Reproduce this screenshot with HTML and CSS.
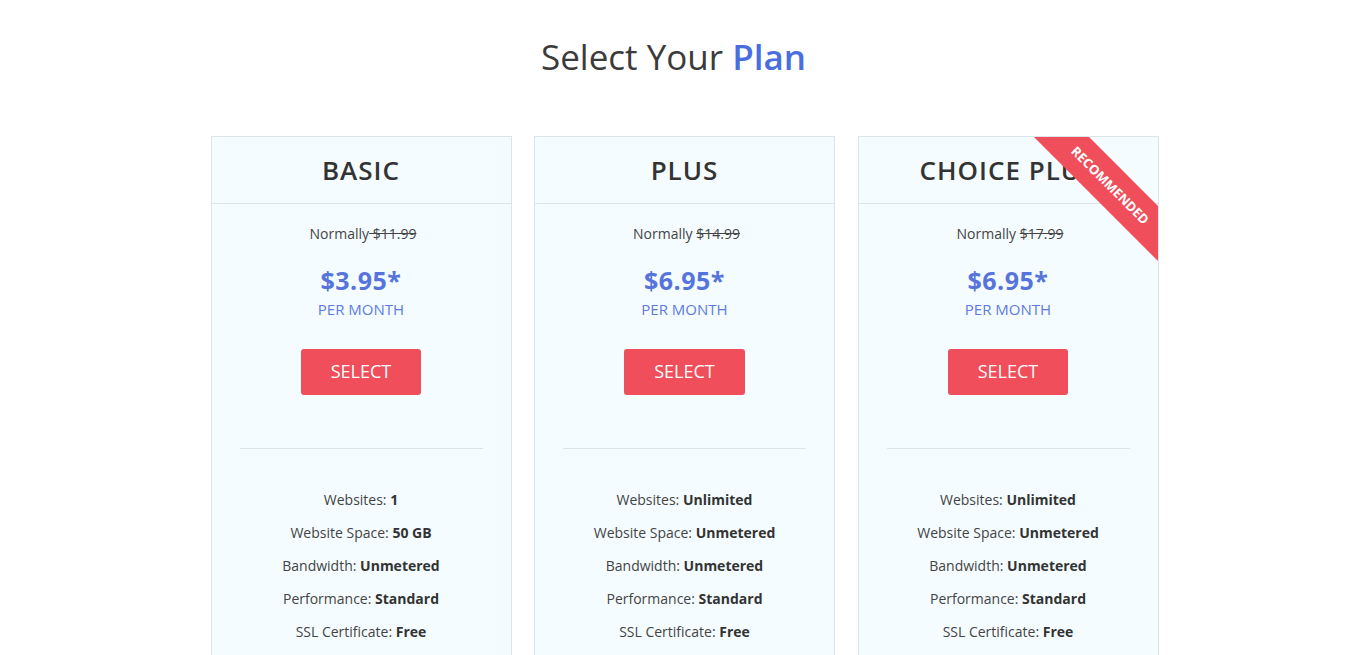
FILE: index.html
```html
<!DOCTYPE html>
<html lang="en">
<head>
<meta charset="utf-8">
<title>Select Your Plan</title>
<link rel="stylesheet" href="styles.css">
</head>
<body>
<section class="pricing">
  <h1 class="title">Select Your <span class="accent">Plan</span></h1>
  <div class="cards">
    <div class="card">
      <div class="card-head">BASIC</div>
      <div class="card-body">
        <p class="normally">Normally<s> $11.99</s></p>
        <p class="price">$3.95*</p>
        <p class="per">PER MONTH</p>
        <a class="btn" href="#">SELECT</a>
        <hr class="sep">
        <ul class="features">
          <li>Websites: <b>1</b></li>
          <li>Website Space: <b>50 GB</b></li>
          <li>Bandwidth: <b>Unmetered</b></li>
          <li>Performance: <b>Standard</b></li>
          <li>SSL Certificate: <b>Free</b></li>
        </ul>
      </div>
    </div>
    <div class="card">
      <div class="card-head">PLUS</div>
      <div class="card-body">
        <p class="normally">Normally <s>$14.99</s></p>
        <p class="price">$6.95*</p>
        <p class="per">PER MONTH</p>
        <a class="btn" href="#">SELECT</a>
        <hr class="sep">
        <ul class="features">
          <li>Websites: <b>Unlimited</b></li>
          <li>Website Space: <b>Unmetered</b></li>
          <li>Bandwidth: <b>Unmetered</b></li>
          <li>Performance: <b>Standard</b></li>
          <li>SSL Certificate: <b>Free</b></li>
        </ul>
      </div>
    </div>
    <div class="card">
      <div class="ribbon">RECOMMENDED</div>
      <div class="card-head">CHOICE PLUS</div>
      <div class="card-body">
        <p class="normally">Normally <s>$17.99</s></p>
        <p class="price">$6.95*</p>
        <p class="per">PER MONTH</p>
        <a class="btn" href="#">SELECT</a>
        <hr class="sep">
        <ul class="features">
          <li>Websites: <b>Unlimited</b></li>
          <li>Website Space: <b>Unmetered</b></li>
          <li>Bandwidth: <b>Unmetered</b></li>
          <li>Performance: <b>Standard</b></li>
          <li>SSL Certificate: <b>Free</b></li>
        </ul>
      </div>
    </div>
  </div>
</section>
</body>
</html>
```

FILE: styles.css
```css
* { box-sizing: border-box; }
html, body {
  margin: 0;
  padding: 0;
  background: #ffffff;
  font-family: "Open Sans", "Liberation Sans", sans-serif;
  color: #444444;
}
.pricing {
  width: 970px;
  margin: 0 auto;
  padding-top: 35px;
}
.title {
  margin: 0 0 58px 0;
  text-align: center;
  font-size: 35px;
  line-height: 43px;
  font-weight: 400;
  color: #3b3b3b;
}
.accent {
  color: #4a6ee0;
  font-weight: 600;
}
.cards {
  display: flex;
  gap: 22.5px;
  padding-left: 22px;
}
.card {
  position: relative;
  overflow: hidden;
  width: 301px;
  flex: 0 0 301px;
  height: 560px;
  background: #f4fcff;
  border: 1px solid #dce6ea;
}
.card-head {
  text-align: center;
  padding: 18px 0;
  line-height: 30px;
  font-size: 26px;
  font-weight: 600;
  letter-spacing: 1px;
  color: #333333;
  border-bottom: 1px solid #dce6ea;
}
.card-body {
  padding-top: 20px;
  text-align: center;
  display: flex;
  flex-direction: column;
  align-items: center;
}
.card-body p { margin: 0; }
.normally {
  font-size: 14px;
  line-height: 20px;
  color: #444444;
  padding-left: 4px;
}
.normally s { color: #444444; }
.price {
  margin-top: 21px !important;
  font-size: 25px;
  line-height: 30px;
  font-weight: 700;
  color: #5674dc;
  letter-spacing: 0.5px;
}
.per {
  margin-top: 4px !important;
  font-size: 15px;
  line-height: 20px;
  color: #5f7bde;
}
.btn {
  margin-top: 30px;
  display: block;
  height: 46px;
  line-height: 45px;
  padding: 0 30px;
  background: #f04e5a;
  color: #ffffff;
  font-size: 18px;
  border-radius: 3px;
  text-decoration: none;
}
.sep {
  align-self: stretch;
  margin: 53px 28px 0 28px;
  border: 0;
  border-top: 1px solid #dce6ea;
  height: 0;
}
.features {
  list-style: none;
  margin: 34px 0 0 0;
  padding: 0;
}
.features li {
  font-size: 14px;
  line-height: 33px;
  color: #444444;
}
.features b {
  font-weight: 700;
  color: #333333;
}
.ribbon {
  position: absolute;
  top: 28.5px;
  right: -52px;
  width: 200px;
  height: 39px;
  line-height: 39px;
  background: #f04e5a;
  color: #ffffff;
  font-size: 13px;
  font-weight: 700;
  text-align: center;
  transform: rotate(45deg);
  z-index: 2;
}
```
